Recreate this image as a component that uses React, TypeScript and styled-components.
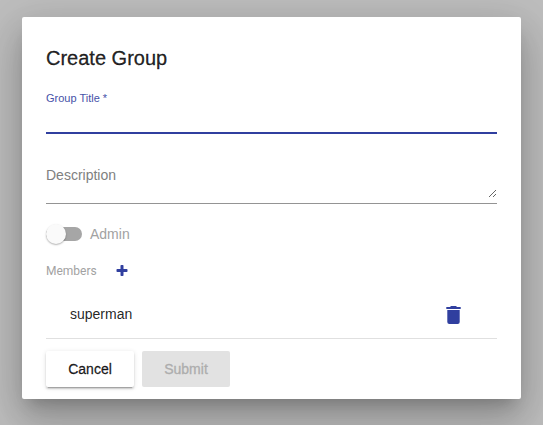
import React, { useState } from "react";
import styled, { createGlobalStyle } from "styled-components";

const indigo = "#303f9f";

const GlobalStyle = createGlobalStyle`
  *, *::before, *::after { box-sizing: border-box; }
  body {
    margin: 0;
    background: #bebebe;
    font-family: "Liberation Sans", Arial, sans-serif;
    font-size: 14px;
    color: rgba(0, 0, 0, 0.87);
  }
`;

const Backdrop = styled.main`
  min-height: 100vh;
  padding: 17px 22px 26px;
  overflow: hidden;
`;

const Dialog = styled.form`
  padding: 24px 24px 12px;
  background: #fff;
  border-radius: 2px;
  box-shadow:
    0 11px 15px -7px rgba(0, 0, 0, 0.2),
    0 24px 38px 3px rgba(0, 0, 0, 0.14),
    0 9px 46px 8px rgba(0, 0, 0, 0.12);
`;

const Title = styled.h1`
  margin: 0;
  font-size: 20px;
  line-height: 34px;
  font-weight: 400;
  -webkit-text-stroke: 0.3px currentColor;
`;

const Field = styled.div`
  display: flex;
  flex-direction: column;
  border-bottom: 2px solid ${indigo};
`;

const TitleLabel = styled.label`
  margin-top: 16px;
  font-size: 11px;
  line-height: 14px;
  color: #4652a8;
`;

const TextInput = styled.input`
  width: 100%;
  height: 27px;
  padding: 0;
  border: 0;
  outline: 0;
  background: transparent;
  font: inherit;
  caret-color: transparent;
`;

const DescriptionField = styled.div`
  display: grid;
  grid-template-areas: "field";
  margin-top: 32px;
  padding-bottom: 5px;
  border-bottom: 1px solid #949494;
`;

const DescriptionLabel = styled.label`
  grid-area: field;
  line-height: 18px;
  color: #808080;
  pointer-events: none;
`;

const TextArea = styled.textarea`
  grid-area: field;
  display: block;
  width: 100%;
  height: 32px;
  padding: 0;
  border: 0;
  outline: 0;
  resize: vertical;
  overflow: auto;
  background: transparent;
  font: inherit;
  line-height: 18px;
  color: inherit;
`;

const ToggleRow = styled.label`
  display: flex;
  align-items: center;
  gap: 8px;
  height: 24px;
  margin-top: 18px;
  color: #a2a2a2;
`;

const Toggle = styled.input`
  appearance: none;
  flex: none;
  display: flex;
  align-items: center;
  width: 36px;
  height: 14px;
  margin: 0;
  border-radius: 7px;
  background: #a6a6a6;
  &::before {
    content: "";
    width: 20px;
    height: 20px;
    border-radius: 50%;
    background: #fafafa;
    box-shadow: 0 1px 2px rgba(0, 0, 0, 0.24), 0 1px 1px rgba(0, 0, 0, 0.08);
  }
  &:checked { background: #9fa8da; justify-content: flex-end; }
`;

const MembersRow = styled.div`
  display: flex;
  align-items: center;
  gap: 19px;
  height: 24px;
  margin-top: 13px;
`;

const MembersHeading = styled.h2`
  margin: 0;
  font: 400 12px/16px Roboto, sans-serif;
  color: #a2a2a2;
`;

const IconButton = styled.button`
  display: flex;
  padding: 0;
  border: 0;
  background: none;
  color: ${indigo};
  cursor: pointer;
`;

const MemberList = styled.ul`
  margin: 6px 0 0;
  padding: 0;
  list-style: none;
`;

const Member = styled.li`
  display: flex;
  align-items: center;
  justify-content: space-between;
  height: 50px;
  padding: 0 36px 0 24px;
  border-bottom: 1px solid #e0e0e0;
`;

const Actions = styled.div`
  display: flex;
  gap: 8px;
  padding-top: 12px;
`;

const Button = styled.button`
  min-width: 88px;
  height: 36px;
  padding: 0 16px;
  border: 0;
  border-radius: 2px;
  background: #fff;
  color: rgba(0, 0, 0, 0.87);
  font: inherit;
  -webkit-text-stroke: 0.3px currentColor;
  box-shadow:
    0 3px 1px -2px rgba(0, 0, 0, 0.2),
    0 2px 2px 0 rgba(0, 0, 0, 0.14),
    0 1px 5px 0 rgba(0, 0, 0, 0.12);
  &:disabled {
    background: #e2e2e2;
    color: #adadad;
    box-shadow: none;
  }
`;

const PlusIcon = () => (
  <svg width="12" height="12" viewBox="0 0 12 12" fill="currentColor" aria-hidden="true">
    <rect x="4.5" y="0" width="3" height="11" rx="0.8" />
    <rect x="0.5" y="4" width="11" height="3" rx="0.8" />
  </svg>
);

const TrashIcon = () => (
  <svg width="15" height="20" viewBox="0 0 15 20" fill="currentColor" aria-hidden="true">
    <path d="M0.3 3H4L5 2h5l1 1h3.7v2H0.3z" />
    <path d="M1.3 6h12.4v12a2 2 0 0 1-2 2H3.3a2 2 0 0 1-2-2z" />
  </svg>
);

export default function App() {
  const [title, setTitle] = useState("");
  const [description, setDescription] = useState("");
  const [members, setMembers] = useState(["superman"]);

  return (
    <>
      <GlobalStyle />
      <Backdrop>
        <Dialog role="dialog" aria-labelledby="dialog-title" onSubmit={(e) => e.preventDefault()}>
          <Title id="dialog-title">Create Group</Title>
          <Field>
            <TitleLabel htmlFor="group-title">Group Title *</TitleLabel>
            <TextInput id="group-title" value={title} onChange={(e) => setTitle(e.target.value)} />
          </Field>
          <DescriptionField>
            <DescriptionLabel htmlFor="description" hidden={description !== ""}>
              Description
            </DescriptionLabel>
            <TextArea
              id="description"
              value={description}
              onChange={(e) => setDescription(e.target.value)}
            />
          </DescriptionField>
          <ToggleRow>
            <Toggle type="checkbox" role="switch" />
            Admin
          </ToggleRow>
          <MembersRow>
            <MembersHeading>Members</MembersHeading>
            <IconButton type="button" aria-label="Add member">
              <PlusIcon />
            </IconButton>
          </MembersRow>
          <MemberList>
            {members.map((name) => (
              <Member key={name}>
                {name}
                <IconButton
                  type="button"
                  aria-label={`Remove ${name}`}
                  onClick={() => setMembers(members.filter((m) => m !== name))}
                >
                  <TrashIcon />
                </IconButton>
              </Member>
            ))}
          </MemberList>
          <Actions>
            <Button type="button">Cancel</Button>
            <Button type="submit" disabled={!title}>Submit</Button>
          </Actions>
        </Dialog>
      </Backdrop>
    </>
  );
}
